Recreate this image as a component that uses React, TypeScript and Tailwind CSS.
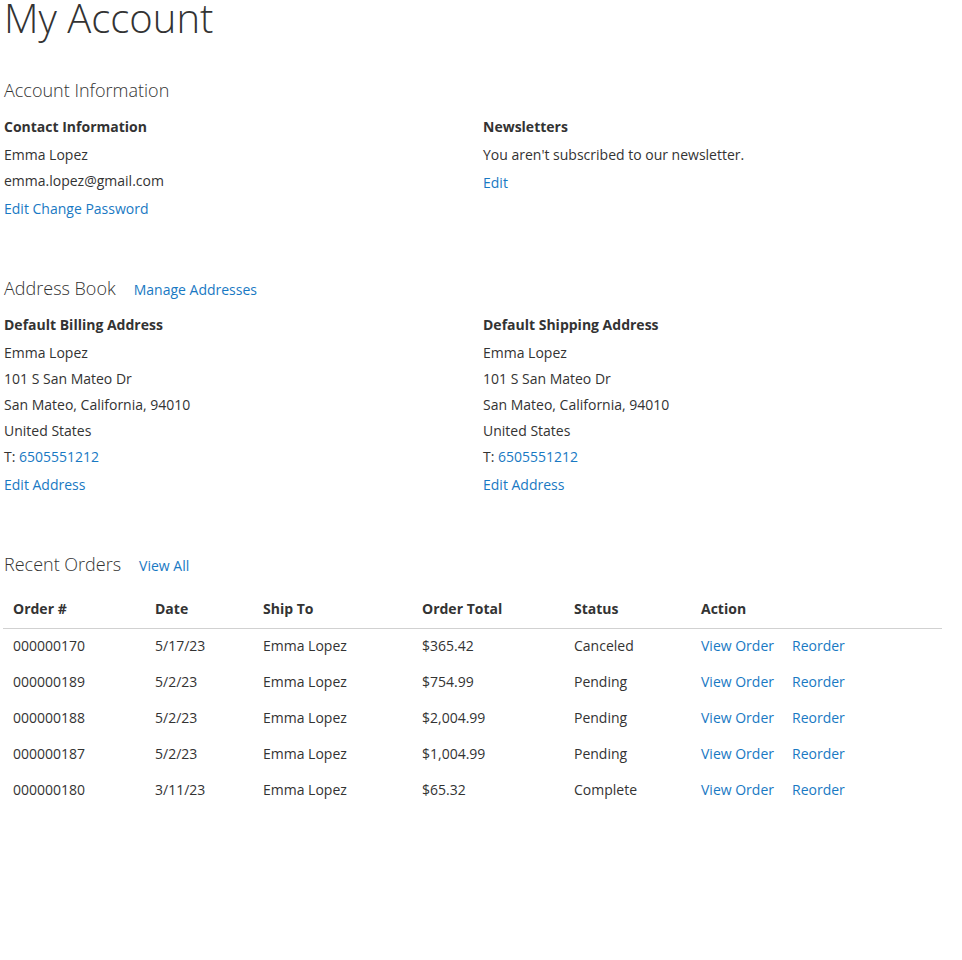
import React from 'react';

const orders = [
  { id: '000000170', date: '5/17/23', ship: 'Emma Lopez', total: '$365.42', status: 'Canceled' },
  { id: '000000189', date: '5/2/23', ship: 'Emma Lopez', total: '$754.99', status: 'Pending' },
  { id: '000000188', date: '5/2/23', ship: 'Emma Lopez', total: '$2,004.99', status: 'Pending' },
  { id: '000000187', date: '5/2/23', ship: 'Emma Lopez', total: '$1,004.99', status: 'Pending' },
  { id: '000000180', date: '3/11/23', ship: 'Emma Lopez', total: '$65.32', status: 'Complete' },
];

const link = 'text-[#1979c3] hover:underline cursor-pointer';

const BlockTitle = ({ title, action }: { title: string; action?: string }) => (
  <div className="flex items-baseline gap-[18px]">
    <h2 className="text-[18px] leading-[28px] font-light text-[#333]">{title}</h2>
    {action && <a className={`${link} text-[14px]`}>{action}</a>}
  </div>
);

const Address = ({ title }: { title: string }) => (
  <div className="w-[483px]">
    <div className="font-bold leading-[26px] mb-[2px]">{title}</div>
    <address className="not-italic leading-[26px]">
      <div>Emma Lopez</div>
      <div>101 S San Mateo Dr</div>
      <div>San Mateo, California, 94010</div>
      <div>United States</div>
      <div>
        T: <a className={link}>6505551212</a>
      </div>
    </address>
    <a className={`${link} block leading-[26px] mt-[2px]`}>Edit Address</a>
  </div>
);

export default function App() {
  return (
    <div
      className="bg-white min-h-[960px] pl-[4px] text-[14px] text-[#333]"
      style={{ fontFamily: '"Open Sans", sans-serif' }}
    >
      <h1 className="text-[40px] leading-[36px] font-light">My Account</h1>

      {/* Account information */}
      <div className="mt-[40px]">
        <BlockTitle title="Account Information" />
        <div className="flex mt-[10px]">
          <div className="w-[483px]">
            <div className="font-bold leading-[26px] mb-[2px]">Contact Information</div>
            <div className="leading-[26px]">Emma Lopez</div>
            <div className="leading-[26px]">emma.lopez@gmail.com</div>
            <div className="leading-[26px] mt-[2px]">
              <a className={link}>Edit</a> <a className={link}>Change Password</a>
            </div>
          </div>
          <div className="w-[483px]">
            <div className="font-bold leading-[26px] mb-[2px]">Newsletters</div>
            <div className="leading-[26px]">You aren't subscribed to our newsletter.</div>
            <a className={`${link} block leading-[26px] mt-[2px]`}>Edit</a>
          </div>
        </div>
      </div>

      {/* Address book */}
      <div className="mt-[52px]">
        <BlockTitle title="Address Book" action="Manage Addresses" />
        <div className="flex mt-[10px]">
          <Address title="Default Billing Address" />
          <Address title="Default Shipping Address" />
        </div>
      </div>

      {/* Recent orders */}
      <div className="mt-[52px]">
        <BlockTitle title="Recent Orders" action="View All" />
        <table className="mt-[14px] -ml-[1px] w-[939px] table-fixed border-collapse text-left">
          <colgroup>
            <col className="w-[142px]" />
            <col className="w-[108px]" />
            <col className="w-[159px]" />
            <col className="w-[152px]" />
            <col className="w-[127px]" />
            <col />
          </colgroup>
          <thead>
            <tr className="border-b border-[#d1d1d1]">
              {['Order #', 'Date', 'Ship To', 'Order Total', 'Status', 'Action'].map((h) => (
                <th key={h} className="font-bold leading-[20px] pt-[7px] pb-[9px] px-[10px]">
                  {h}
                </th>
              ))}
            </tr>
          </thead>
          <tbody>
            {orders.map((o) => (
              <tr key={o.id}>
                <td className="leading-[20px] pt-[7px] pb-[9px] px-[10px]">{o.id}</td>
                <td className="leading-[20px] pt-[7px] pb-[9px] px-[10px]">{o.date}</td>
                <td className="leading-[20px] pt-[7px] pb-[9px] px-[10px]">{o.ship}</td>
                <td className="leading-[20px] pt-[7px] pb-[9px] px-[10px]">{o.total}</td>
                <td className="leading-[20px] pt-[7px] pb-[9px] px-[10px]">{o.status}</td>
                <td className="leading-[20px] pt-[7px] pb-[9px] px-[10px]">
                  <a className={link}>View Order</a>
                  <a className={`${link} ml-[18px]`}>Reorder</a>
                </td>
              </tr>
            ))}
          </tbody>
        </table>
      </div>
    </div>
  );
}
